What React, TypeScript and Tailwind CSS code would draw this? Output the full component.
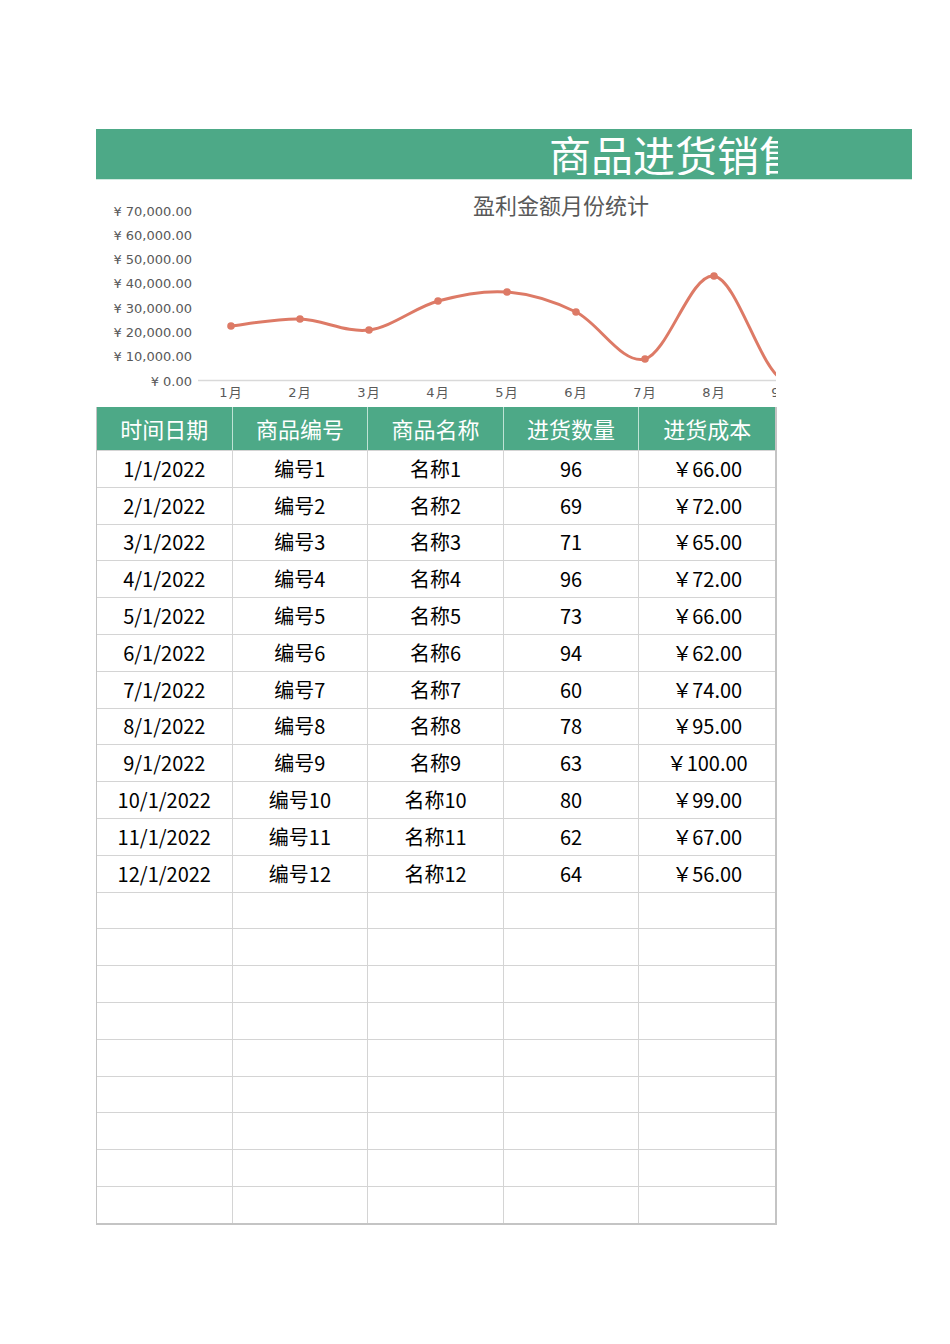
import React from 'react';

const font = "font-['Noto_Sans_CJK_SC','Noto_Sans',sans-serif]";

const rows = [
  ['1/1/2022', '编号1', '名称1', '96', '￥66.00'],
  ['2/1/2022', '编号2', '名称2', '69', '￥72.00'],
  ['3/1/2022', '编号3', '名称3', '71', '￥65.00'],
  ['4/1/2022', '编号4', '名称4', '96', '￥72.00'],
  ['5/1/2022', '编号5', '名称5', '73', '￥66.00'],
  ['6/1/2022', '编号6', '名称6', '94', '￥62.00'],
  ['7/1/2022', '编号7', '名称7', '60', '￥74.00'],
  ['8/1/2022', '编号8', '名称8', '78', '￥95.00'],
  ['9/1/2022', '编号9', '名称9', '63', '￥100.00'],
  ['10/1/2022', '编号10', '名称10', '80', '￥99.00'],
  ['11/1/2022', '编号11', '名称11', '62', '￥67.00'],
  ['12/1/2022', '编号12', '名称12', '64', '￥56.00'],
];
const emptyRows = 9;
const headers = ['时间日期', '商品编号', '商品名称', '进货数量', '进货成本'];

// chart coords are relative to the chart box (96,180)
const yLabels = ['¥ 70,000.00', '¥ 60,000.00', '¥ 50,000.00', '¥ 40,000.00', '¥ 30,000.00', '¥ 20,000.00', '¥ 10,000.00', '¥ 0.00'];
const yPos = [31, 55, 79, 103, 128, 152, 176, 201];
const months = ['1月', '2月', '3月', '4月', '5月', '6月', '7月', '8月', '9月'];
const pts: [number, number][] = [
  [135, 146], [204, 139], [273, 150], [342, 121], [411, 112], [480, 132], [549, 179], [618, 96], [687, 200], [756, 160],
];
const axisFont = 'DejaVu Sans, Noto Sans CJK SC, sans-serif';

function smoothPath(p: [number, number][]) {
  let d = `M${p[0][0]},${p[0][1]}`;
  for (let i = 0; i < p.length - 1; i++) {
    const p0 = p[i - 1] ?? p[i];
    const p1 = p[i];
    const p2 = p[i + 1];
    const p3 = p[i + 2] ?? p2;
    const c1x = p1[0] + (p2[0] - p0[0]) / 6;
    const c1y = p1[1] + (p2[1] - p0[1]) / 6;
    const c2x = p2[0] - (p3[0] - p1[0]) / 6;
    const c2y = p2[1] - (p3[1] - p1[1]) / 6;
    d += ` C${c1x},${c1y} ${c2x},${c2y} ${p2[0]},${p2[1]}`;
  }
  return d;
}

function Chart() {
  return (
    <div className="relative h-[227px] w-[680px]">
      <div className="absolute left-0 right-0 top-[13px] text-center pl-[250px] text-[22px] leading-none text-[#595959]">
        盈利金额月份统计
      </div>
      <svg width={680} height={227} className="block" style={{ overflow: 'hidden' }}>
        {yLabels.map((l, i) => (
          <text key={l} x={96} y={yPos[i]} textAnchor="end" dominantBaseline="central" fontSize={13} fill="#595959" fontFamily={axisFont}>
            {l}
          </text>
        ))}
        <line x1={102} y1={200.5} x2={680} y2={200.5} stroke="#d9d9d9" strokeWidth={1.5} />
        {months.map((m, i) => (
          <text key={m} x={135 + i * 69} y={212} textAnchor="middle" dominantBaseline="central" fontSize={13} letterSpacing={1} fill="#595959" fontFamily={axisFont}>
            {m}
          </text>
        ))}
        <path d={smoothPath(pts)} fill="none" stroke="#dd7a66" strokeWidth={3} strokeLinecap="round" />
        {pts.slice(0, 9).map(([x, y], i) => (
          <circle key={i} cx={x} cy={y} r={3.8} fill="#dd7a66" />
        ))}
      </svg>
    </div>
  );
}

export default function App() {
  return (
    <div className={`min-h-[1344px] w-[950px] bg-white pt-[129px] pl-[96px] ${font}`}>
      <div className="flex h-[51px] w-[816px] items-center overflow-hidden border-b border-[#cfe9df] bg-[#4da987]">
        <div className="w-[682px] overflow-hidden whitespace-nowrap pl-[453px] text-[42px] leading-none text-white">
          商品进货销售统计表
        </div>
      </div>
      <Chart />
      <div className="w-[681px] border-r-2 border-b-2 border-l border-[#c4c4c4]">
        <div className="grid h-[43px] grid-cols-5 bg-[#4da987]">
          {headers.map((h, i) => (
            <div
              key={h}
              className={`flex items-center justify-center text-[22px] text-white ${i < 4 ? 'border-r border-[#bfe3d5]' : ''}`}
            >
              {h}
            </div>
          ))}
        </div>
        {rows.map((r, ri) => (
          <div key={ri} className="grid h-[36.8px] grid-cols-5 border-t border-[#d4d4d4]">
            {r.map((c, ci) => (
              <div
                key={ci}
                className={`flex items-center justify-center text-[20px] text-black ${ci < 4 ? 'border-r border-[#d4d4d4]' : ''}`}
              >
                {c}
              </div>
            ))}
          </div>
        ))}
        {Array.from({ length: emptyRows }).map((_, ri) => (
          <div key={`e${ri}`} className="grid h-[36.8px] grid-cols-5 border-t border-[#d4d4d4]">
            {[0, 1, 2, 3, 4].map((ci) => (
              <div key={ci} className={ci < 4 ? 'border-r border-[#d4d4d4]' : ''} />
            ))}
          </div>
        ))}
      </div>
    </div>
  );
}
